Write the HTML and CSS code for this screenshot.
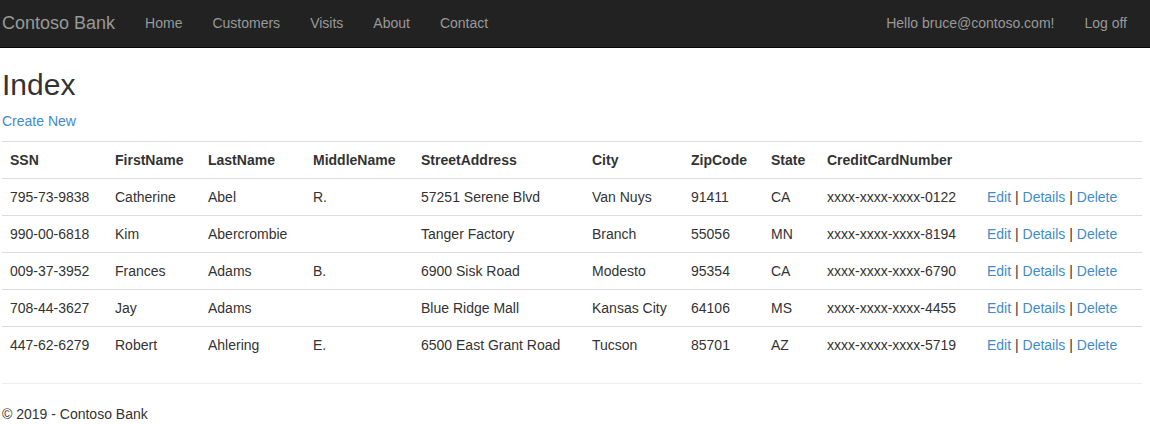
FILE: index.html
```html
<!DOCTYPE html>
<html>
<head>
<meta charset="utf-8">
<title>Index - Contoso Bank</title>
<link rel="stylesheet" href="styles.css">
</head>
<body>
<div class="navbar">
  <div class="container nav-inner">
    <a class="brand" href="#">Contoso Bank</a>
    <ul class="nav">
      <li><a href="#">Home</a></li>
      <li><a href="#">Customers</a></li>
      <li><a href="#">Visits</a></li>
      <li><a href="#">About</a></li>
      <li><a href="#">Contact</a></li>
    </ul>
    <ul class="nav nav-right">
      <li><a href="#">Hello bruce@contoso.com!</a></li>
      <li><a href="#">Log off</a></li>
    </ul>
  </div>
</div>
<div class="container body-content">
  <h2 class="title">Index</h2>
  <p class="create"><a href="#">Create New</a></p>
  <table class="table">
    <colgroup>
      <col class="c-ssn"><col class="c-first"><col class="c-last"><col class="c-mid"><col class="c-street"><col class="c-city"><col class="c-zip"><col class="c-state"><col class="c-cc"><col class="c-act">
    </colgroup>
    <tr>
      <th>SSN</th><th>FirstName</th><th>LastName</th><th>MiddleName</th><th>StreetAddress</th><th>City</th><th>ZipCode</th><th>State</th><th>CreditCardNumber</th><th></th>
    </tr>
    <tr>
      <td>795-73-9838</td><td>Catherine</td><td>Abel</td><td>R.</td><td>57251 Serene Blvd</td><td>Van Nuys</td><td>91411</td><td>CA</td><td>xxxx-xxxx-xxxx-0122</td>
      <td><a href="#">Edit</a> | <a href="#">Details</a> | <a href="#">Delete</a></td>
    </tr>
    <tr>
      <td>990-00-6818</td><td>Kim</td><td>Abercrombie</td><td></td><td>Tanger Factory</td><td>Branch</td><td>55056</td><td>MN</td><td>xxxx-xxxx-xxxx-8194</td>
      <td><a href="#">Edit</a> | <a href="#">Details</a> | <a href="#">Delete</a></td>
    </tr>
    <tr>
      <td>009-37-3952</td><td>Frances</td><td>Adams</td><td>B.</td><td>6900 Sisk Road</td><td>Modesto</td><td>95354</td><td>CA</td><td>xxxx-xxxx-xxxx-6790</td>
      <td><a href="#">Edit</a> | <a href="#">Details</a> | <a href="#">Delete</a></td>
    </tr>
    <tr>
      <td>708-44-3627</td><td>Jay</td><td>Adams</td><td></td><td>Blue Ridge Mall</td><td>Kansas City</td><td>64106</td><td>MS</td><td>xxxx-xxxx-xxxx-4455</td>
      <td><a href="#">Edit</a> | <a href="#">Details</a> | <a href="#">Delete</a></td>
    </tr>
    <tr>
      <td>447-62-6279</td><td>Robert</td><td>Ahlering</td><td>E.</td><td>6500 East Grant Road</td><td>Tucson</td><td>85701</td><td>AZ</td><td>xxxx-xxxx-xxxx-5719</td>
      <td><a href="#">Edit</a> | <a href="#">Details</a> | <a href="#">Delete</a></td>
    </tr>
  </table>
  <hr class="rule">
  <footer class="footer">
    <p>&copy; 2019 - Contoso Bank</p>
  </footer>
</div>
</body>
</html>
```
FILE: styles.css
```css
* { box-sizing: border-box; }
html, body { margin: 0; padding: 0; }
body {
  font-family: "Liberation Sans", Arial, sans-serif;
  font-size: 14px;
  line-height: 20px;
  color: #333333;
  background: #ffffff;
}
a { color: #428bca; text-decoration: none; }

.container { width: 1140px; margin-left: 2px; }

.navbar {
  background: #222222;
  border-bottom: 1px solid #080808;
  height: 48px;
}
.nav-inner { display: flex; align-items: stretch; height: 47px; }
.brand {
  color: #999999;
  font-size: 18px;
  line-height: 20px;
  padding: 13px 15px 14px 0;
}
.nav {
  list-style: none;
  margin: 0;
  padding: 0;
  display: flex;
}
.nav li a {
  display: block;
  color: #999999;
  padding: 13px 15px 14px;
  line-height: 20px;
}
.nav-right { margin-left: auto; }

.title {
  font-family: "Liberation Sans", Arial, sans-serif;
  font-size: 30px;
  font-weight: 500;
  line-height: 33px;
  margin: 20px 0 10px;
}
.create { margin: 0 0 10px; }

.table {
  width: 1140px;
  border-collapse: collapse;
  border-spacing: 0;
  table-layout: fixed;
  margin-bottom: 20px;
}
.table th, .table td {
  padding: 8px;
  line-height: 20px;
  text-align: left;
  vertical-align: top;
  border-top: 1px solid #dddddd;
  white-space: nowrap;
}
.table th { font-weight: bold; }

.c-ssn { width: 105px; }
.c-first { width: 93px; }
.c-last { width: 105px; }
.c-mid { width: 108px; }
.c-street { width: 171px; }
.c-city { width: 99px; }
.c-zip { width: 80px; }
.c-state { width: 56px; }
.c-cc { width: 160px; }
.c-act { width: 163px; }

.rule {
  margin: 0 0 20px;
  border: 0;
  border-top: 1px solid #eeeeee;
  height: 0;
}
.footer p { margin: 0; }
```
